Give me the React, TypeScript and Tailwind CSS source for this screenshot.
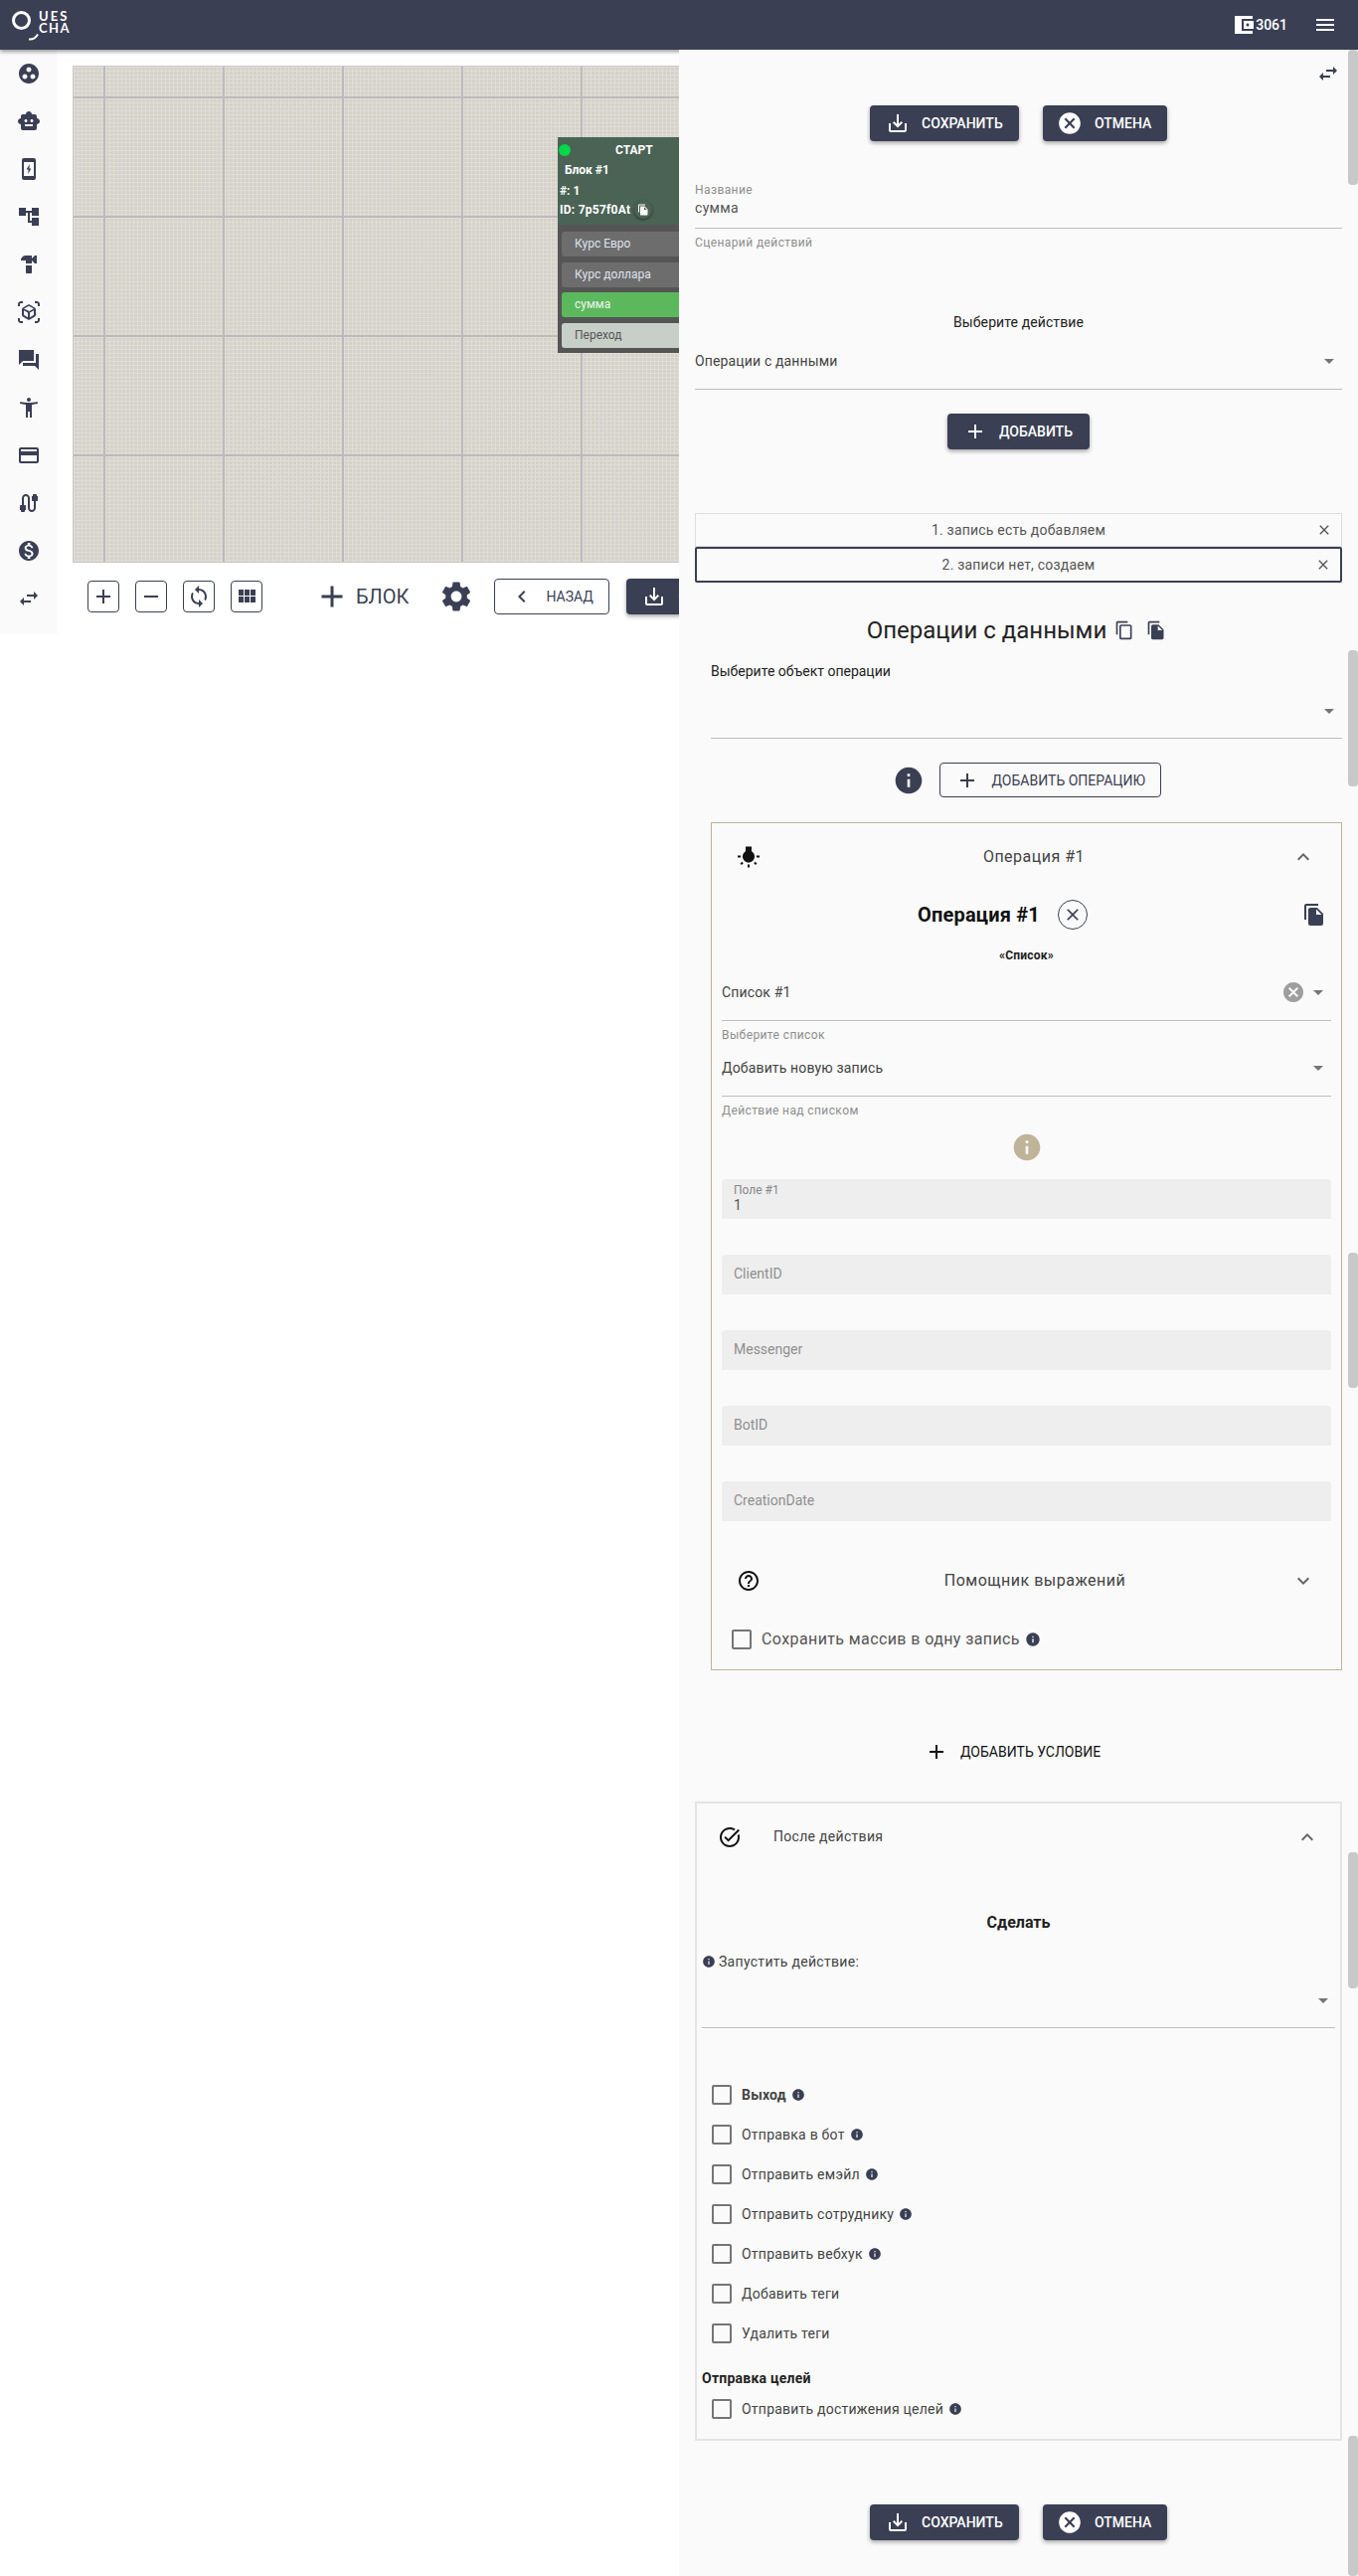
import React from "react";

const P = {
  save: "M19 12v7H5v-7H3v7c0 1.1.9 2 2 2h14c1.1 0 2-.9 2-2v-7h-2zm-6 .67l2.59-2.58L17 11.5l-5 5-5-5 1.41-1.41L11 12.67V3h2z",
  cancel: "M12 2C6.47 2 2 6.47 2 12s4.47 10 10 10 10-4.47 10-10S17.53 2 12 2zm5 13.59L15.59 17 12 13.41 8.41 17 7 15.59 10.59 12 7 8.41 8.41 7 12 10.59 15.59 7 17 8.41 13.41 12 17 15.59z",
  swap: "M6.99 11L3 15l3.99 4v-3H14v-2H6.99v-3zM21 9l-3.99-4v3H10v2h7.01v3L21 9z",
  add: "M19 13h-6v6h-2v-6H5v-2h6V5h2v6h6v2z",
  remove: "M19 13H5v-2h14v2z",
  close: "M19 6.41L17.59 5 12 10.59 6.41 5 5 6.41 10.59 12 5 17.59 6.41 19 12 13.41 17.59 19 19 17.59 13.41 12z",
  drop: "M7 10l5 5 5-5z",
  less: "M12 8l-6 6 1.41 1.41L12 10.83l4.59 4.58L18 14z",
  more: "M16.59 8.59L12 13.17 7.41 8.59 6 10l6 6 6-6z",
  info: "M12 2C6.48 2 2 6.48 2 12s4.48 10 10 10 10-4.48 10-10S17.52 2 12 2zm1 15h-2v-6h2v6zm0-8h-2V7h2v2z",
  file: "M16 1H4c-1.1 0-2 .9-2 2v14h2V3h12V1zm-1 4l6 6v10c0 1.1-.9 2-2 2H7.99C6.89 23 6 22.1 6 21l.01-14c0-1.1.89-2 1.99-2h7zm-1 7h5.5L14 6.5V12z",
  copy: "M16 1H4c-1.1 0-2 .9-2 2v14h2V3h12V1zm3 4H8c-1.1 0-2 .9-2 2v14c0 1.1.9 2 2 2h11c1.1 0 2-.9 2-2V7c0-1.1-.9-2-2-2zm0 16H8V7h11v14z",
  gear: "M19.14 12.94c.04-.3.06-.61.06-.94 0-.32-.02-.64-.07-.94l2.03-1.58c.18-.14.23-.41.12-.61l-1.92-3.32c-.12-.22-.37-.29-.59-.22l-2.39.96c-.5-.38-1.03-.7-1.62-.94l-.36-2.54c-.04-.24-.24-.41-.48-.41h-3.84c-.24 0-.43.17-.47.41l-.36 2.54c-.59.24-1.13.57-1.62.94l-2.39-.96c-.22-.08-.47 0-.59.22L2.74 8.87c-.12.21-.08.47.12.61l2.03 1.58c-.05.3-.09.63-.09.94s.02.64.07.94l-2.03 1.58c-.18.14-.23.41-.12.61l1.92 3.32c.12.22.37.29.59.22l2.39-.96c.5.38 1.03.7 1.62.94l.36 2.54c.05.24.24.41.48.41h3.84c.24 0 .44-.17.47-.41l.36-2.54c.59-.24 1.13-.56 1.62-.94l2.39.96c.22.08.47 0 .59-.22l1.92-3.32c.12-.22.07-.47-.12-.61l-2.01-1.58zM12 15.6c-1.98 0-3.6-1.62-3.6-3.6s1.62-3.6 3.6-3.6 3.6 1.62 3.6 3.6-1.62 3.6-3.6 3.6z",
  left: "M15.41 7.41L14 6l-6 6 6 6 1.41-1.41L10.83 12z",
  grid: "M4 11h5V5H4v6zm0 7h5v-6H4v6zm6 0h5v-6h-5v6zm6 0h5v-6h-5v6zm-6-7h5V5h-5v6zm6-6v6h5V5h-5z",
  loop: "M12 4V1L8 5l4 4V6c3.31 0 6 2.69 6 6 0 1.01-.25 1.97-.7 2.8l1.46 1.46C19.54 15.03 20 13.57 20 12c0-4.42-3.58-8-8-8zm0 14c-3.31 0-6-2.69-6-6 0-1.01.25-1.97.7-2.8L5.24 7.74C4.46 8.97 4 10.43 4 12c0 4.42 3.58 8 8 8v3l4-4-4-4v3z",
  workspaces: "M12 2C6.48 2 2 6.48 2 12s4.48 10 10 10 10-4.48 10-10S17.52 2 12 2zM8 17.5c-1.38 0-2.5-1.12-2.5-2.5s1.12-2.5 2.5-2.5 2.5 1.12 2.5 2.5-1.12 2.5-2.5 2.5zM9.5 8c0-1.38 1.12-2.5 2.5-2.5s2.5 1.12 2.5 2.5-1.12 2.5-2.5 2.5S9.5 9.38 9.5 8zm6.5 9.5c-1.38 0-2.5-1.12-2.5-2.5s1.12-2.5 2.5-2.5 2.5 1.12 2.5 2.5-1.12 2.5-2.5 2.5z",
  bot: "M20 9V7c0-1.1-.9-2-2-2h-3c0-1.66-1.34-3-3-3S9 3.34 9 5H6c-1.1 0-2 .9-2 2v2c-1.66 0-3 1.34-3 3s1.34 3 3 3v4c0 1.1.9 2 2 2h12c1.1 0 2-.9 2-2v-4c1.66 0 3-1.34 3-3s-1.34-3-3-3zM7.5 11.5C7.5 10.67 8.17 10 9 10s1.5.67 1.5 1.5S9.83 13 9 13s-1.5-.67-1.5-1.5zM16 17H8v-2h8v2zm-1-4c-.83 0-1.5-.67-1.5-1.5S14.17 10 15 10s1.5.67 1.5 1.5S15.83 13 15 13z",
  tree: "M22 11V3h-7v3H9V3H2v8h7V8h2v10h4v3h7v-8h-7v3h-2V8h2v3z",
  hammer: "M18 3l-3 3V3H9C6.24 3 4 5.24 4 8h5v3h6V8l3 3h2V3h-2zM9 13v7c0 .55.45 1 1 1h4c.55 0 1-.45 1-1v-7H9z",
  ar: "M3 4c0-.55.45-1 1-1h2V1H4C2.34 1 1 2.34 1 4v2h2V4zm0 16v-2H1v2c0 1.66 1.34 3 3 3h2v-2H4c-.55 0-1-.45-1-1zM20 1h-2v2h2c.55 0 1 .45 1 1v2h2V4c0-1.66-1.34-3-3-3zm1 19c0 .55-.45 1-1 1h-2v2h2c1.66 0 3-1.34 3-3v-2h-2v2zm-2-5.13V9.13c0-.72-.38-1.38-1-1.73l-5-2.88c-.31-.18-.65-.27-1-.27s-.69.09-1 .27L6 7.39c-.62.36-1 1.02-1 1.74v5.74c0 .72.38 1.38 1 1.73l5 2.88c.31.18.65.27 1 .27s.69-.09 1-.27l5-2.88c.62-.35 1-1.01 1-1.73zm-8 2.3l-4-2.3v-4.63l4 2.33v4.6zm1-6.33L7.04 8.53 12 5.66l4.96 2.87L12 11.34zm5 4.03l-4 2.3v-4.6l4-2.33v4.63z",
  forum: "M22 6h-3v9H6v3h12l4 4V6zm-5 7V2H2v15l4-4h11z",
  person: "M20.5 6c-2.61.7-5.67 1-8.5 1s-5.89-.3-8.5-1L3 8c1.86.5 4 .83 6 1v13h2v-6h2v6h2V9c2-.17 4.14-.5 6-1l-.5-2zM12 6c1.1 0 2-.9 2-2s-.9-2-2-2-2 .9-2 2 .9 2 2 2z",
  card: "M20 4H4c-1.11 0-1.99.89-1.99 2L2 18c0 1.11.89 2 2 2h16c1.11 0 2-.89 2-2V6c0-1.11-.89-2-2-2zm0 14H4v-6h16v6zm0-10H4V6h16v2z",
  cable: "M20 5V4c0-.55-.45-1-1-1h-2c-.55 0-1 .45-1 1v1h-1v4c0 .55.45 1 1 1h1v7c0 1.1-.9 2-2 2s-2-.9-2-2V7c0-2.21-1.79-4-4-4S5 4.79 5 7v7H4c-.55 0-1 .45-1 1v4h1v1c0 .55.45 1 1 1h2c.55 0 1-.45 1-1v-1h1v-4c0-.55-.45-1-1-1H7V7c0-1.1.9-2 2-2s2 .9 2 2v10c0 2.21 1.79 4 4 4s4-1.79 4-4v-7h1c.55 0 1-.45 1-1V5h-1z",
  money: "M12 2C6.48 2 2 6.48 2 12s4.48 10 10 10 10-4.48 10-10S17.52 2 12 2zm1.41 16.09V20h-2.67v-1.93c-1.71-.36-3.16-1.46-3.27-3.4h1.96c.1 1.05.82 1.87 2.65 1.87 1.96 0 2.4-.98 2.4-1.59 0-.83-.44-1.61-2.67-2.14-2.48-.6-4.18-1.62-4.18-3.67 0-1.72 1.39-2.84 3.11-3.21V4h2.67v1.95c1.86.45 2.79 1.86 2.85 3.39H14.3c-.05-1.11-.64-1.87-2.22-1.87-1.5 0-2.4.68-2.4 1.64 0 .84.65 1.39 2.67 1.91s4.18 1.39 4.18 3.91c-.01 1.83-1.38 2.83-3.12 3.16z",
  wallet: "M21 18v3H3V3h18v3H10v12h11zm-9-2h10V8H12v8zm4-2.5c-.83 0-1.5-.67-1.5-1.5s.67-1.5 1.5-1.5 1.5.67 1.5 1.5-.67 1.5-1.5 1.5z",
  menu: "M3 18h18v-2H3v2zm0-5h18v-2H3v2zm0-7v2h18V6H3z",
  bulb: "M3.55 18.54l1.41 1.41 1.79-1.8-1.41-1.41-1.79 1.8zM11 22.45h2V19.5h-2v2.95zM4 10.5H1v2h3v-2zm11-4.19V1.5H9v4.81C7.21 7.35 6 9.28 6 11.5c0 3.31 2.69 6 6 6s6-2.69 6-6c0-2.22-1.21-4.15-3-5.19zm5 4.19v2h3v-2h-3zm-2.76 7.66l1.79 1.8 1.41-1.41-1.8-1.79-1.4 1.4z",
  help: "M11 18h2v-2h-2v2zm1-16C6.48 2 2 6.48 2 12s4.48 10 10 10 10-4.48 10-10S17.52 2 12 2zm0 18c-4.41 0-8-3.59-8-8s3.59-8 8-8 8 3.59 8 8-3.59 8-8 8zm0-14c-2.21 0-4 1.79-4 4h2c0-1.1.9-2 2-2s2 .9 2 2c0 2-3 1.75-3 5h2c0-2.25 3-2.5 3-5 0-2.21-1.79-4-4-4z",
  task: "M22 5.18L10.59 16.6l-4.24-4.24 1.41-1.41 2.83 2.83 10-10L22 5.18zm-2.21 5.04c.13.57.21 1.17.21 1.78 0 4.42-3.58 8-8 8s-8-3.58-8-8 3.58-8 8-8c1.58 0 3.04.46 4.28 1.25l1.44-1.44C16.1 2.67 14.13 2 12 2 6.48 2 2 6.48 2 12s4.48 10 10 10 10-4.48 10-10c0-1.19-.22-2.33-.6-3.39l-1.61 1.61z",
};

function Ic({ d, className = "w-6 h-6" }: { d: string; className?: string }) {
  return (
    <svg viewBox="0 0 24 24" fill="currentColor" className={"shrink-0 " + className}>
      <path d={d} />
    </svg>
  );
}

function Phone() {
  return (
    <svg viewBox="0 0 24 24" className="w-6 h-6 shrink-0">
      <rect x="5" y="1" width="14" height="22" rx="2" fill="#3b3f54" />
      <rect x="7" y="5" width="10" height="14" fill="#fafafa" />
      <path d="M12.8 7 9.6 12.6h2l-.4 4.4 3.2-5.6h-2z" fill="#3b3f54" />
    </svg>
  );
}

function SaveBtn() {
  return (
    <button className="h-9 w-[150px] shrink-0 flex items-center pl-4 gap-3 bg-[#3b3f54] text-white rounded-[4px] shadow-[0_2px_4px_rgba(0,0,0,0.35)] text-sm font-medium">
      <Ic d={P.save} />
      <span>СОХРАНИТЬ</span>
    </button>
  );
}

function SaveCancel() {
  return (
    <div className="flex justify-center gap-6">
      <SaveBtn />
      <button className="h-9 w-[125px] flex items-center pl-[14px] gap-3 bg-[#3b3f54] text-white rounded-[4px] shadow-[0_2px_4px_rgba(0,0,0,0.35)] text-sm font-medium">
        <Ic d={P.cancel} className="w-[26px] h-[26px]" />
        <span>ОТМЕНА</span>
      </button>
    </div>
  );
}

function Label({ children, className = "" }: { children: React.ReactNode; className?: string }) {
  return <div className={"h-[14px] text-xs leading-[14px] tracking-[0.4px] text-[#8e8e8e] " + className}>{children}</div>;
}

function Select({ value, pad, clear }: { value: string; pad: string; clear?: boolean }) {
  return (
    <div className={"flex items-center border-b border-[#bdbdbd] text-sm leading-5 tracking-[0.15px] text-[#444] " + pad}>
      <span className="flex-1">{value}</span>
      {clear && <Ic d={P.cancel} className="w-6 h-6 text-[#9e9e9e] mr-[1px]" />}
      <Ic d={P.drop} className="w-6 h-6 text-[#757575]" />
    </div>
  );
}

function Field({ label, value, className = "" }: { label?: string; value?: string; className?: string }) {
  return (
    <div className={"h-10 bg-[#eeeeee] rounded-t-[4px] pl-3 flex flex-col justify-center " + className}>
      {value ? (
        <>
          <div className="text-xs leading-[13px] text-[#888] mt-[-1px]">{label}</div>
          <div className="text-sm leading-[16px] text-[#555]">{value}</div>
        </>
      ) : (
        <div className="text-sm leading-5 text-[#8f8f8f] mt-[-3px]">{label}</div>
      )}
    </div>
  );
}

function Box() {
  return <span className="w-5 h-5 shrink-0 border-2 border-[#757575] rounded-[2px]" />;
}

function Check({ text, info = true, bold = false }: { text: string; info?: boolean; bold?: boolean }) {
  return (
    <div className="h-5 flex items-center ml-[15px]">
      <Box />
      <span className={"ml-[10px] text-sm tracking-[0.23px] text-[#444] " + (bold ? "font-bold text-[#222]" : "")}>{text}</span>
      {info && <Ic d={P.info} className="w-[14px] h-[14px] text-[#3b3f54] ml-[5px]" />}
    </div>
  );
}

function ToolBtn({ d }: { d: string }) {
  return (
    <button className="w-8 h-8 flex items-center justify-center border border-[#3b3f54] rounded-[4px] text-[#3b3f54]">
      <Ic d={d} />
    </button>
  );
}

function NodeItem({ text, className }: { text: string; className: string }) {
  return <div className={"h-[25px] pl-[13px] rounded-[3px] text-xs leading-[25px] " + className}>{text}</div>;
}

const sideIcons = ["workspaces", "bot", "phone", "tree", "hammer", "ar", "forum", "person", "card", "cable", "money", "swap"] as const;

export default function App() {
  return (
    <div className="relative w-[1366px] h-[2591px] overflow-hidden bg-white font-['Roboto',sans-serif]">
      <header className="relative z-10 h-[50px] bg-[#3b3f54] shadow-[0_2px_4px_rgba(0,0,0,0.4)] flex items-center text-white">
        <div className="relative w-[70px] h-[50px] shrink-0">
          <span className="absolute left-3 top-[11px] w-[19px] h-[19px] rounded-full border-[3px] border-white" />
          <svg viewBox="0 0 12 8" className="absolute left-[28px] top-[33px] w-3 h-2">
            <path d="M1 6.5c4 .5 7-1.5 9-5" fill="none" stroke="#fff" strokeWidth="2" />
          </svg>
          <span className="absolute left-[39px] top-[10px] text-[13px] leading-[13px] font-['Lato',sans-serif] font-bold tracking-[2px]">UES</span>
          <span className="absolute left-[39px] top-[22px] text-[13px] leading-[13px] font-['Lato',sans-serif] font-bold tracking-[1.5px]">CHA</span>
        </div>
        <div className="ml-auto flex items-center">
          <Ic d={P.wallet} />
          <span className="text-sm font-medium">3061</span>
          <Ic d={P.menu} className="w-6 h-6 ml-[26px] mr-[21px]" />
        </div>
      </header>

      <div className="flex items-start">
        {/* left pane */}
        <div className="w-[683px] shrink-0 overflow-hidden flex items-start">
          <aside className="w-[57px] h-[588px] shrink-0 bg-[#fafafa] flex flex-col items-center pt-3 gap-6 text-[#3b3f54]">
            {sideIcons.map((k) => (k === "phone" ? <Phone key={k} /> : <Ic key={k} d={P[k]} />))}
          </aside>
          <div className="flex-1 min-w-0 pt-4 pl-4">
            <div className="relative w-[640px] h-[500px] overflow-hidden border border-[#c9c9c9] bg-[#d5d2ca] [background-image:linear-gradient(90deg,#bdbabd_2px,transparent_2px),linear-gradient(#bdbabd_2px,transparent_2px),linear-gradient(90deg,#e0ddd6_1px,transparent_1px),linear-gradient(#e0ddd6_1px,transparent_1px)] [background-size:120px_120px,120px_120px,4px_4px,4px_4px] [background-position:30px_30px,30px_30px,0_0,0_0]">
              <div className="absolute left-[487px] top-[71px] w-[220px] h-[217px] bg-[#555] rounded-tl-[3px]">
                <div className="relative h-[88px] bg-[#4a6355] text-white text-xs font-bold">
                  <span className="absolute left-[1px] top-[7px] w-[12px] h-[12px] rounded-full bg-[#00d84a]" />
                  <span className="absolute left-[58px] top-[5px] leading-4">СТАРТ</span>
                  <span className="absolute left-[7px] top-[25px] leading-4">Блок #1</span>
                  <span className="absolute left-[2px] top-[46px] leading-4">#: 1</span>
                  <span className="absolute left-[2px] top-[65px] leading-4 tracking-[0.25px]">ID: 7p57f0At</span>
                  <span className="absolute left-[77px] top-[64px] w-[18px] h-[18px] rounded-full bg-[#4a6355] shadow-[0_1px_3px_rgba(0,0,0,0.5)] flex items-center justify-center">
                    <Ic d={P.file} className="w-3 h-3 text-white" />
                  </span>
                </div>
                <div className="pl-1 pt-[7px] flex flex-col gap-[5.5px]">
                  <NodeItem text="Курс Евро" className="bg-[#6d6d6d] text-[#dfe3ee]" />
                  <NodeItem text="Курс доллара" className="bg-[#6d6d6d] text-[#dfe3ee]" />
                  <NodeItem text="сумма" className="bg-[#5cb85c] text-[#eef5ee]" />
                  <NodeItem text="Переход" className="bg-[#c8cec8] text-[#555]" />
                </div>
              </div>
            </div>
            <div className="flex items-center h-[72px] pb-[4px] pl-[15px]">
              <div className="flex gap-4">
                <ToolBtn d={P.add} />
                <ToolBtn d={P.remove} />
                <ToolBtn d={P.loop} />
                <ToolBtn d={P.grid} />
              </div>
              <Ic d={P.add} className="w-9 h-9 ml-[52px] text-[#3b3f54]" />
              <span className="ml-[6px] text-xl leading-7 text-[#3b3f54]">БЛОК</span>
              <Ic d={P.gear} className="w-9 h-9 ml-[30px] text-[#3b3f54]" />
              <button className="ml-5 w-[116px] h-9 shrink-0 flex items-center pl-[15px] gap-3 border border-[#3b3f54] rounded-[4px] text-sm text-[#3b3f54]">
                <Ic d={P.left} />
                <span>НАЗАД</span>
              </button>
              <div className="ml-[17px]"><SaveBtn /></div>
            </div>
          </div>
        </div>

        {/* drawer */}
        <div className="relative z-20 w-[683px] shrink-0 h-[2541px] bg-[#fafafa] px-4 pt-3 text-[#444]">
          <div className="flex justify-end pr-[2px] text-[#3b3f54]"><Ic d={P.swap} /></div>
          <div className="mt-5"><SaveCancel /></div>

          <Label className="mt-[42px]">Название</Label>
          <div className="mt-[1px] pb-[10px] border-b border-[#bdbdbd] text-sm leading-5 tracking-[0.3px] text-[#555]">сумма</div>
          <Label className="mt-[7px]">Сценарий действий</Label>

          <div className="mt-[63px] text-center text-sm leading-5 tracking-[0.1px] text-[#222]">Выберите действие</div>
          <Select value="Операции с данными" pad="mt-[17px] pb-[16px] pr-[1px]" />

          <button className="mt-6 mx-auto h-9 w-[143px] flex items-center pl-4 gap-3 bg-[#3b3f54] text-white rounded-[4px] shadow-[0_2px_4px_rgba(0,0,0,0.35)] text-sm font-medium">
            <Ic d={P.add} />
            <span>ДОБАВИТЬ</span>
          </button>

          <div className="relative mt-16 h-[34px] border border-[#dddddd] flex items-center justify-center text-sm tracking-[0.2px] text-[#555]">
            1. запись есть добавляем
            <Ic d={P.close} className="absolute right-[9px] top-[8px] w-4 h-4 text-[#555]" />
          </div>
          <div className="relative h-9 border-2 border-[#3b3f54] rounded-[2px] flex items-center justify-center text-sm tracking-[0.2px] text-[#555]">
            2. записи нет, создаем
            <Ic d={P.close} className="absolute right-[9px] top-[8px] w-4 h-4 text-[#555]" />
          </div>

          <div className="mt-8 h-8 flex items-center justify-center text-[#222] pr-1">
            <span className="text-2xl leading-8">Операции с данными</span>
            <Ic d={P.copy} className="w-5 h-5 ml-2 text-[#3b3f54]" />
            <Ic d={P.file} className="w-5 h-5 ml-3 text-[#3b3f54]" />
          </div>

          <div className="ml-4">
            <div className="mt-[15px] h-5 text-sm leading-5 text-[#222]">Выберите объект операции</div>
            <div className="h-[58px] pt-[18px] border-b border-[#bdbdbd] flex justify-end pr-[1px] text-[#757575]"><Ic d={P.drop} /></div>

            <div className="mt-6 h-[35px] flex items-center justify-center">
              <Ic d={P.info} className="w-8 h-8 text-[#3b3f54]" />
              <button className="ml-[15px] h-[35px] w-[223px] flex items-center pl-[15px] gap-[13px] border border-[#3b3f54] rounded-[4px] text-sm text-[#3b3f54]">
                <Ic d={P.add} />
                <span>ДОБАВИТЬ ОПЕРАЦИЮ</span>
              </button>
            </div>

            <div className="mt-[25px] border border-[#bfb49a] pt-[10px] pb-5">
              <div className="h-12 flex items-center pl-[25px] pr-[26px]">
                <Ic d={P.bulb} className="w-6 h-6 text-[#111]" />
                <span className="flex-1 text-center pl-4 text-base tracking-[0.5px] text-[#444]">Операция #1</span>
                <Ic d={P.less} className="w-6 h-6 text-[#666]" />
              </div>
              <div className="mt-[17px] h-[34px] flex items-center pl-[207px] pr-[15px]">
                <span className="text-xl font-bold tracking-[0.2px] text-[#111]">Операция #1</span>
                <span className="ml-[18px] w-[30px] h-[30px] rounded-full border border-[#3b3f54] flex items-center justify-center text-[#3b3f54]">
                  <Ic d={P.close} className="w-5 h-5" />
                </span>
                <Ic d={P.file} className="w-6 h-6 ml-auto text-[#3b3f54]" />
              </div>
              <div className="mt-4 h-4 text-center text-xs font-bold leading-4 tracking-[0.2px] text-[#222]">«Список»</div>

              <div className="px-[10px]">
                <Select value="Список #1" pad="mt-[17px] pb-[16px] pr-[1px]" clear />
                <Label className="mt-[7px]">Выберите список</Label>
                <Select value="Добавить новую запись" pad="mt-[14px] pb-[16px] pr-[1px]" />
                <Label className="mt-[7px]">Действие над списком</Label>
                <div className="mt-[14px] flex justify-center text-[#bfb49a]"><Ic d={P.info} className="w-8 h-8" /></div>
                <div className="mt-4 flex flex-col gap-9">
                  <Field label="Поле #1" value="1" />
                  <Field label="ClientID" />
                  <Field label="Messenger" />
                  <Field label="BotID" />
                  <Field label="CreationDate" />
                </div>
              </div>

              <div className="mt-9 h-12 flex items-center pl-[25px] pr-[26px]">
                <Ic d={P.help} className="w-6 h-6 text-[#111]" />
                <span className="flex-1 text-center pl-[18px] text-base tracking-[0.5px] text-[#444]">Помощник выражений</span>
                <Ic d={P.more} className="w-6 h-6 text-[#666]" />
              </div>
              <div className="mt-[25px] h-5 flex items-center pl-5">
                <Box />
                <span className="ml-[10px] text-base tracking-[0.4px] text-[#555]">Сохранить массив в одну запись</span>
                <Ic d={P.info} className="w-4 h-4 ml-[5px] text-[#3b3f54]" />
              </div>
            </div>
          </div>

          <div className="mt-[70px] h-6 flex items-center ml-[231px] text-[#111]">
            <Ic d={P.add} />
            <span className="ml-3 text-sm">ДОБАВИТЬ УСЛОВИЕ</span>
          </div>

          <div className="mt-[38px] border-2 border-[#e4e4e4] pt-[10px] h-[643px]">
            <div className="h-12 flex items-center pl-[21px] pr-[21px]">
              <Ic d={P.task} className="w-6 h-6 text-[#111]" />
              <span className="ml-8 flex-1 text-sm tracking-[0.3px] text-[#444] mt-[-3px]">После действия</span>
              <Ic d={P.less} className="w-6 h-6 text-[#666]" />
            </div>
            <div className="mt-[50px] h-6 text-center text-base font-bold leading-6 text-[#222]">Сделать</div>
            <div className="mt-[17px] h-5 pl-[5px] flex items-center text-sm tracking-[0.3px] text-[#444]">
              <Ic d={P.info} className="w-[14px] h-[14px] text-[#3b3f54] mr-[3px]" />
              Запустить действие:
            </div>
            <div className="mx-[5px] h-[57px] pt-[17px] border-b border-[#bdbdbd] flex justify-end text-[#757575]"><Ic d={P.drop} /></div>
            <div className="mt-[57px] flex flex-col gap-5">
              <Check text="Выход" bold />
              <Check text="Отправка в бот" />
              <Check text="Отправить емэйл" />
              <Check text="Отправить сотруднику" />
              <Check text="Отправить вебхук" />
              <Check text="Добавить теги" info={false} />
              <Check text="Удалить теги" info={false} />
            </div>
            <div className="mt-[25px] h-5 pl-[5px] text-sm font-bold leading-5 tracking-[0.23px] text-[#222]">Отправка целей</div>
            <div className="mt-[11px]"><Check text="Отправить достижения целей" /></div>
          </div>

          <div className="mt-[64px]"><SaveCancel /></div>

          {/* scrollbar thumbs captured in the stitched screenshot */}
          <span className="absolute right-0 top-0 w-[10px] h-[136px] rounded-[4px] bg-[#c8c8c8]" />
          <span className="absolute right-0 top-[604px] w-[10px] h-[137px] rounded-[4px] bg-[#c8c8c8]" />
          <span className="absolute right-0 top-[1210px] w-[10px] h-[136px] rounded-[4px] bg-[#c8c8c8]" />
          <span className="absolute right-0 top-[1813px] w-[10px] h-[137px] rounded-[4px] bg-[#c8c8c8]" />
          <span className="absolute right-0 top-[2400px] w-[10px] h-[141px] rounded-[4px] bg-[#c8c8c8]" />
        </div>
      </div>
    </div>
  );
}
